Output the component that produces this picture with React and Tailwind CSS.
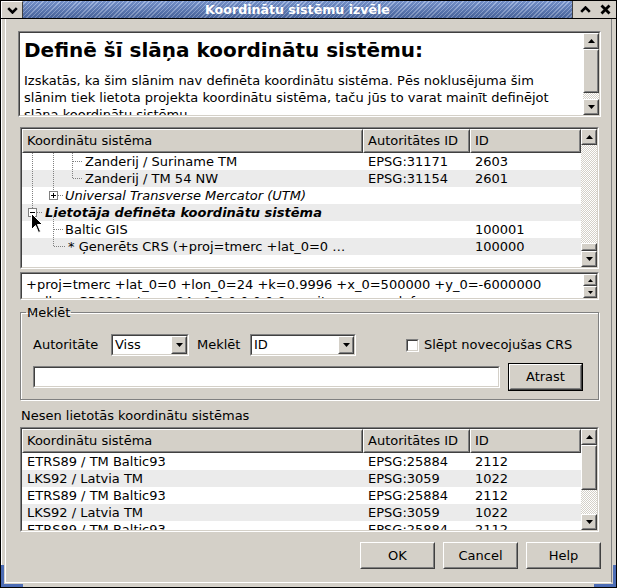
import React from "react";

const RAISED_OUT = "border border-t-white border-l-white border-r-[#404040] border-b-[#404040]";
const RAISED_IN = "border border-t-[#d4d0c8] border-l-[#d4d0c8] border-r-[#808080] border-b-[#808080]";
const SUNKEN_OUT = "border border-t-[#808080] border-l-[#808080] border-r-white border-b-white";
const SUNKEN_IN = "border border-t-[#404040] border-l-[#404040] border-r-[#d4d0c8] border-b-[#d4d0c8]";
const CHECKER =
  "bg-[image:repeating-conic-gradient(#d4d0c8_0%_25%,#ffffff_0%_50%)] bg-[length:2px_2px]";

function Raised({ className = "", inner = "", children }) {
  return (
    <div className={`${RAISED_OUT} bg-[#d4d0c8] ${className}`}>
      <div className={`${RAISED_IN} flex h-full w-full items-center ${inner}`}>{children}</div>
    </div>
  );
}

function Sunken({ className = "", inner = "", children }) {
  return (
    <div className={`${SUNKEN_OUT} ${className}`}>
      <div className={`${SUNKEN_IN} h-full w-full ${inner}`}>{children}</div>
    </div>
  );
}

function Tri({ up, small }) {
  if (small) {
    return (
      <svg width="5" height="3" viewBox="0 0 5 3">
        <polygon points={up ? "0,3 2.5,0 5,3" : "0,0 2.5,3 5,0"} fill="black" />
      </svg>
    );
  }
  return (
    <svg width="7" height="4" viewBox="0 0 7 4">
      <polygon points={up ? "0,4 3.5,0 7,4" : "0,0 3.5,4 7,0"} fill="black" />
    </svg>
  );
}

function ScrollBtn({ up, className = "h-[16px]" }) {
  return (
    <Raised className={`shrink-0 ${className}`} inner="justify-center">
      <Tri up={up} />
    </Raised>
  );
}

function HeaderRow() {
  return (
    <div className="flex h-[24px] shrink-0">
      <Raised className="h-full w-[341px]" inner="pl-[3px]">Koordinātu sistēma</Raised>
      <Raised className="h-full w-[107px]" inner="pl-[3px]">Autoritātes ID</Raised>
      <Raised className="h-full flex-1" inner="pl-[3px]">ID</Raised>
    </div>
  );
}

const treeRows = [
  { pad: "pl-[63px]", text: "Zanderij / Suriname TM", auth: "EPSG:31171", id: "2603" },
  { pad: "pl-[63px]", text: "Zanderij / TM 54 NW", auth: "EPSG:31154", id: "2601" },
  { pad: "pl-[43px] italic", text: "Universal Transverse Mercator (UTM)" },
  { pad: "pl-[23px] italic font-bold", text: "Lietotāja definēta koordinātu sistēma" },
  { pad: "pl-[43px]", text: "Baltic GIS", id: "100001" },
  { pad: "pl-[46px]", text: "* Ģenerēts CRS (+proj=tmerc +lat_0=0 …", id: "100000" },
];

const recentRows = [
  { text: "ETRS89 / TM Baltic93", auth: "EPSG:25884", id: "2112" },
  { text: "LKS92 / Latvia TM", auth: "EPSG:3059", id: "1022" },
  { text: "ETRS89 / TM Baltic93", auth: "EPSG:25884", id: "2112" },
  { text: "LKS92 / Latvia TM", auth: "EPSG:3059", id: "1022" },
  { text: "ETRS89 / TM Baltic93", auth: "EPSG:25884", id: "2112" },
];

function Row({ pad = "pl-[5px]", text, auth, id, alt }) {
  return (
    <div className={`flex h-[17px] shrink-0 leading-[17px] whitespace-nowrap ${alt ? "bg-[#ebebeb]" : "bg-white"}`}>
      <div className={`w-[341px] overflow-hidden ${pad}`}>{text}</div>
      <div className="w-[107px] pl-[5px]">{auth}</div>
      <div className="flex-1 pl-[5px]">{id}</div>
    </div>
  );
}

function TreeLines() {
  const dot = { stroke: "#808080", strokeWidth: 1, strokeDasharray: "1 1", shapeRendering: "crispEdges" };
  return (
    <svg className="pointer-events-none absolute inset-0 h-full w-full">
      <line x1="10.5" y1="0" x2="10.5" y2="55" {...dot} />
      <line x1="31.5" y1="0" x2="31.5" y2="38" {...dot} />
      <line x1="50.5" y1="0" x2="50.5" y2="26" {...dot} />
      <line x1="51" y1="8.5" x2="60" y2="8.5" {...dot} />
      <line x1="51" y1="25.5" x2="60" y2="25.5" {...dot} />
      <line x1="36" y1="42.5" x2="42" y2="42.5" {...dot} />
      <line x1="15" y1="59.5" x2="21" y2="59.5" {...dot} />
      <line x1="31.5" y1="64" x2="31.5" y2="94" {...dot} />
      <line x1="32" y1="76.5" x2="41" y2="76.5" {...dot} />
      <line x1="32" y1="93.5" x2="43" y2="93.5" {...dot} />
      <rect x="27.5" y="38.5" width="8" height="8" fill="white" stroke="#808080" shapeRendering="crispEdges" />
      <line x1="29" y1="42.5" x2="34" y2="42.5" stroke="black" shapeRendering="crispEdges" />
      <line x1="31.5" y1="40" x2="31.5" y2="45" stroke="black" shapeRendering="crispEdges" />
      <rect x="6.5" y="55.5" width="8" height="8" fill="white" stroke="#808080" shapeRendering="crispEdges" />
      <line x1="8" y1="59.5" x2="13" y2="59.5" stroke="black" shapeRendering="crispEdges" />
      {/* mouse pointer */}
      <path
        d="M9.5 60.5 L9.5 76.5 L13.5 72.5 L16.5 79.5 L18.5 78.5 L15.5 71.5 L20.5 71.5 Z"
        fill="black"
        stroke="white"
        strokeWidth="1"
      />
    </svg>
  );
}

export default function App() {
  return (
    <div className="relative flex h-[588px] w-[617px] flex-col overflow-hidden border border-black bg-[#d4d0c8] font-['DejaVu_Sans',sans-serif] text-[13px] text-black">
      {/* Title bar */}
      <div className="flex h-[18px] shrink-0 border-b border-black">
        <div className="flex w-[22px] items-center justify-center border-r border-[#404040] border-t border-t-white border-l border-l-white">
          <svg width="11" height="7" viewBox="0 0 11 7">
            <path d="M1.2 1.2 L5.5 5.5 L9.8 1.2" stroke="black" strokeWidth="2.6" fill="none" />
          </svg>
        </div>
        <div className="flex flex-1 items-center justify-center bg-[image:linear-gradient(to_bottom,rgba(255,255,255,0.18),rgba(0,0,0,0.18)),repeating-linear-gradient(135deg,#5577bb_0px,#5577bb_2px,#8fa9dd_2px,#8fa9dd_3px)] text-[12.6px] font-bold leading-[17px] text-white">
          Koordinātu sistēmu izvēle
        </div>
        <div className="flex w-[44px] items-center justify-around border-l border-[#404040] pl-[2px]">
          <svg width="11" height="7" viewBox="0 0 11 7">
            <path d="M1.2 5.8 L5.5 1.5 L9.8 5.8" stroke="black" strokeWidth="2.6" fill="none" />
          </svg>
          <svg width="11" height="11" viewBox="0 0 11 11">
            <path d="M1.5 1.5 L9.5 9.5 M9.5 1.5 L1.5 9.5" stroke="black" strokeWidth="2.8" />
          </svg>
        </div>
      </div>

      {/* Body */}
      <div className="flex flex-1 flex-col pl-[3px] pr-[4px] pb-[4px] border-l border-l-white">
        <div className="flex flex-1 flex-col border-l border-l-white border-r border-r-[#808080] border-b border-b-white pl-[14px] pr-[12px] pt-[12px]">
          {/* Description */}
          <Sunken className="-mx-[2px] h-[86px] shrink-0" inner="flex bg-white">
            <div className="flex-1 overflow-hidden pl-[4px] pt-[5px]">
              <div className="text-[20px] font-bold leading-[24px]">Definē šī slāņa koordinātu sistēmu:</div>
              <div className="mt-[10px] whitespace-nowrap leading-[17px]">
                Izskatās, ka šim slānim nav definēta koordinātu sistēma. Pēs noklusējuma šim
                <br />
                slānim tiek lietota projekta koordinātu sistēma, taču jūs to varat mainīt definējot
                <br />
                slāņa koordinātu sistēmu.
              </div>
            </div>
            <div className="flex w-[16px] flex-col">
              <ScrollBtn up />
              <Raised className="h-[44px] shrink-0" />
              <div className={`flex-1 ${CHECKER}`} />
              <ScrollBtn />
            </div>
          </Sunken>

          {/* Tree */}
          <Sunken className="mt-[10px] h-[142px] shrink-0" inner="flex bg-white">
            <div className="flex min-w-0 flex-1 flex-col">
              <HeaderRow />
              <div className="relative flex-1 overflow-hidden">
                {treeRows.map((r, i) => (
                  <Row key={i} {...r} alt={i % 2 === 1} />
                ))}
                <TreeLines />
              </div>
            </div>
            <div className="flex w-[16px] flex-col">
              <ScrollBtn up />
              <div className={`flex-1 ${CHECKER}`} />
              <Raised className="h-[8px] shrink-0" />
              <ScrollBtn />
            </div>
          </Sunken>

          {/* Proj string */}
          <Sunken className="mt-[3px] h-[28px] shrink-0" inner="flex bg-white">
            <div className="flex-1 overflow-hidden whitespace-nowrap pl-[4px] pt-[2px] leading-[17px]">
              +proj=tmerc +lat_0=0 +lon_0=24 +k=0.9996 +x_0=500000 +y_0=-6000000
              <br />
              +ellps=GRS80 +towgs84=0,0,0,0,0,0,0 +units=m +no_defs
            </div>
            <div className="flex w-[14px] flex-col">
              <Raised className="h-[12px] shrink-0" inner="justify-center">
                <Tri up small />
              </Raised>
              <Raised className="h-[12px] shrink-0" inner="justify-center">
                <Tri small />
              </Raised>
            </div>
          </Sunken>

          {/* Search */}
          <fieldset className="mt-[4px] shrink-0 border border-[#808080] shadow-[inset_1px_1px_0_#ffffff,1px_1px_0_#ffffff] pb-[8px]">
            <legend className="ml-[5px] px-[1px] leading-[17px]">Meklēt</legend>
            <div className="flex h-[22px] items-center pl-[12px] pt-0 mt-[13px]">
              <div className="w-[78px] shrink-0">Autoritāte</div>
              <Sunken className="h-[22px] w-[78px] shrink-0" inner="flex bg-white">
                <div className="flex-1 pl-[2px] leading-[18px]">Viss</div>
                <Raised className="h-full w-[16px]" inner="justify-center">
                  <Tri />
                </Raised>
              </Sunken>
              <div className="ml-[8px] w-[53px] shrink-0">Meklēt</div>
              <Sunken className="h-[22px] w-[106px] shrink-0" inner="flex bg-white">
                <div className="flex-1 pl-[2px] leading-[18px]">ID</div>
                <Raised className="h-full w-[16px]" inner="justify-center">
                  <Tri />
                </Raised>
              </Sunken>
              <Sunken className="ml-[50px] h-[13px] w-[13px] shrink-0" inner="bg-white" />
              <div className="ml-[5px] whitespace-nowrap">Slēpt novecojušas CRS</div>
            </div>
            <div className="mt-[7px] flex items-center pl-[12px]">
              <Sunken className="h-[22px] w-[467px] shrink-0" inner="bg-white" />
              <div className="ml-[8px] h-[28px] w-[75px] shrink-0 border border-black">
                <Raised className="h-full w-full" inner="justify-center">
                  Atrast
                </Raised>
              </div>
            </div>
          </fieldset>

          <div className="mt-[7px] pl-[1px] leading-[17px]">Nesen lietotās koordinātu sistēmas</div>

          {/* Recent */}
          <Sunken className="mt-[3px] h-[105px] shrink-0" inner="flex bg-white">
            <div className="flex min-w-0 flex-1 flex-col">
              <HeaderRow />
              <div className="flex-1 overflow-hidden">
                {recentRows.map((r, i) => (
                  <Row key={i} {...r} alt={i % 2 === 1} />
                ))}
              </div>
            </div>
            <div className="flex w-[16px] flex-col">
              <ScrollBtn up />
              <Raised className="h-[45px] shrink-0" />
              <div className={`flex-1 ${CHECKER}`} />
              <ScrollBtn />
            </div>
          </Sunken>

          {/* Buttons */}
          <div className="-mr-[2px] mt-[10px] flex justify-end gap-[8px]">
            <Raised className="h-[27px] w-[75px]" inner="justify-center">OK</Raised>
            <Raised className="h-[27px] w-[75px]" inner="justify-center">Cancel</Raised>
            <Raised className="h-[27px] w-[75px]" inner="justify-center">Help</Raised>
          </div>
        </div>
      </div>

      {/* focused frame corners */}
      <div className="absolute bottom-0 left-0 h-[22px] w-[3px] bg-[#4d6db5]" />
      <div className="absolute bottom-0 left-0 h-[3px] w-[22px] bg-[#4d6db5]" />
      <div className="absolute bottom-0 right-0 h-[22px] w-[3px] bg-[#4d6db5]" />
      <div className="absolute bottom-0 right-0 h-[3px] w-[22px] bg-[#4d6db5]" />
    </div>
  );
}
